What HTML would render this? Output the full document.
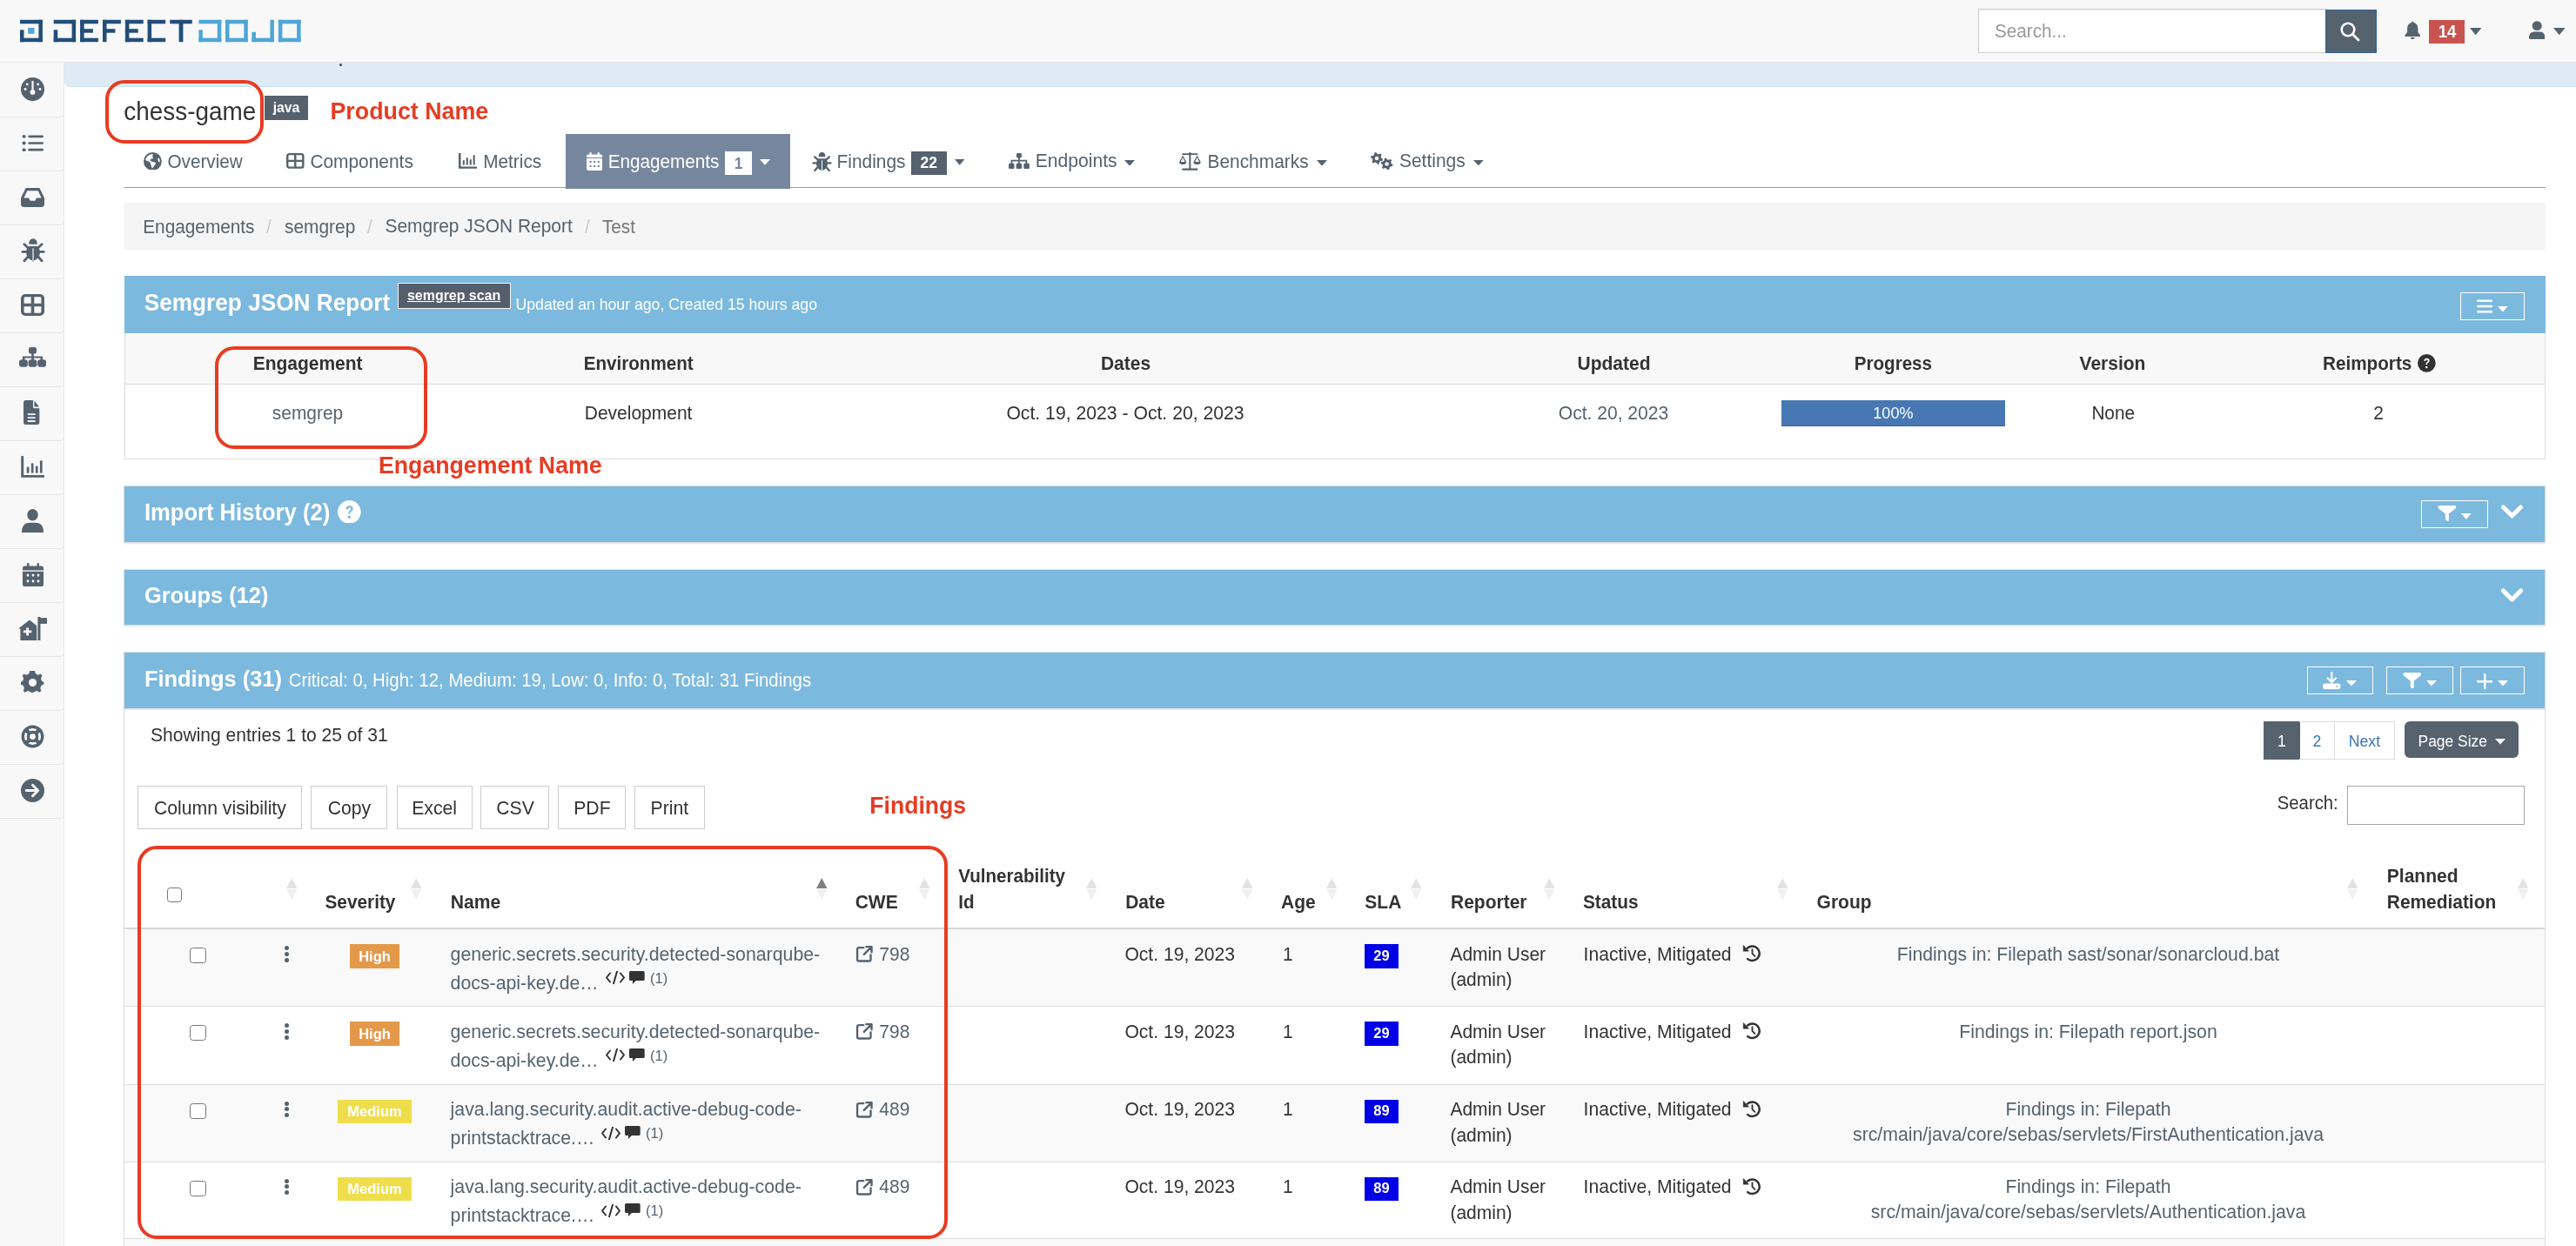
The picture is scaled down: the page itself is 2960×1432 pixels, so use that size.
<!DOCTYPE html>
<html><head><meta charset="utf-8"><title>DefectDojo</title>
<style>
html,body{margin:0;padding:0;width:2960px;height:1432px;overflow:hidden;background:#fff;font-family:"Liberation Sans", sans-serif;}
#w>div,#w>svg{position:absolute;}
.t{position:absolute;white-space:nowrap;line-height:normal;font-family:"Liberation Sans", sans-serif;}
</style></head><body><div id="w" style="position:absolute;left:0;top:0;width:2960px;height:1432px;will-change:transform">
<div style="left:0.0px;top:0.0px;width:2960.0px;height:1432.0px;background:#fff"></div>
<div style="left:0.0px;top:72.0px;width:74.0px;height:1360.0px;background:#f8f8f8;border-right:1px solid #e7e7e7;box-sizing:border-box"></div>
<div style="left:-2.0px;top:71.0px;width:76.0px;height:63.9px;border:1.2px solid #e6e6e6;border-top:none;border-radius:0 0 5px 0;box-sizing:border-box"></div>
<div style="left:-2.0px;top:133.0px;width:76.0px;height:63.9px;border:1.2px solid #e6e6e6;border-top:none;border-radius:0 0 5px 0;box-sizing:border-box"></div>
<div style="left:-2.0px;top:195.0px;width:76.0px;height:63.9px;border:1.2px solid #e6e6e6;border-top:none;border-radius:0 0 5px 0;box-sizing:border-box"></div>
<div style="left:-2.0px;top:257.0px;width:76.0px;height:63.9px;border:1.2px solid #e6e6e6;border-top:none;border-radius:0 0 5px 0;box-sizing:border-box"></div>
<div style="left:-2.0px;top:319.0px;width:76.0px;height:63.9px;border:1.2px solid #e6e6e6;border-top:none;border-radius:0 0 5px 0;box-sizing:border-box"></div>
<div style="left:-2.0px;top:381.0px;width:76.0px;height:63.9px;border:1.2px solid #e6e6e6;border-top:none;border-radius:0 0 5px 0;box-sizing:border-box"></div>
<div style="left:-2.0px;top:443.0px;width:76.0px;height:63.9px;border:1.2px solid #e6e6e6;border-top:none;border-radius:0 0 5px 0;box-sizing:border-box"></div>
<div style="left:-2.0px;top:505.0px;width:76.0px;height:63.9px;border:1.2px solid #e6e6e6;border-top:none;border-radius:0 0 5px 0;box-sizing:border-box"></div>
<div style="left:-2.0px;top:567.0px;width:76.0px;height:63.9px;border:1.2px solid #e6e6e6;border-top:none;border-radius:0 0 5px 0;box-sizing:border-box"></div>
<div style="left:-2.0px;top:629.0px;width:76.0px;height:63.9px;border:1.2px solid #e6e6e6;border-top:none;border-radius:0 0 5px 0;box-sizing:border-box"></div>
<div style="left:-2.0px;top:691.0px;width:76.0px;height:63.9px;border:1.2px solid #e6e6e6;border-top:none;border-radius:0 0 5px 0;box-sizing:border-box"></div>
<div style="left:-2.0px;top:753.0px;width:76.0px;height:63.9px;border:1.2px solid #e6e6e6;border-top:none;border-radius:0 0 5px 0;box-sizing:border-box"></div>
<div style="left:-2.0px;top:815.0px;width:76.0px;height:63.9px;border:1.2px solid #e6e6e6;border-top:none;border-radius:0 0 5px 0;box-sizing:border-box"></div>
<div style="left:-2.0px;top:877.0px;width:76.0px;height:63.9px;border:1.2px solid #e6e6e6;border-top:none;border-radius:0 0 5px 0;box-sizing:border-box"></div>
<svg style="position:absolute;left:24.0px;top:88.5px;width:27.0px;height:27.0px;" viewBox="0 0 24 24" preserveAspectRatio="none"><circle cx="12" cy="12" r="12" fill="#55636f"/><rect x="11" y="3.5" width="2" height="9" fill="#f8f8f8"/><circle cx="12" cy="15" r="2.6" fill="#f8f8f8"/><circle cx="6.5" cy="7" r="1.3" fill="#f8f8f8"/><circle cx="17.5" cy="7" r="1.3" fill="#f8f8f8"/><circle cx="4.5" cy="12" r="1.3" fill="#f8f8f8"/><circle cx="19.5" cy="12" r="1.3" fill="#f8f8f8"/></svg>
<svg style="position:absolute;left:25.0px;top:152.5px;width:25.0px;height:23.0px;" viewBox="0 0 24 24" preserveAspectRatio="none"><circle cx="2.5" cy="4" r="2" fill="#55636f"/><circle cx="2.5" cy="12" r="2" fill="#55636f"/><circle cx="2.5" cy="20" r="2" fill="#55636f"/><rect x="7" y="2.6" width="17" height="2.8" rx="1.4" fill="#55636f"/><rect x="7" y="10.6" width="17" height="2.8" rx="1.4" fill="#55636f"/><rect x="7" y="18.6" width="17" height="2.8" rx="1.4" fill="#55636f"/></svg>
<svg style="position:absolute;left:24.0px;top:213.5px;width:27.0px;height:25.0px;" viewBox="0 0 24 24" preserveAspectRatio="none"><path d="M5 2H19L24 13V20Q24 23 21 23H3Q0 23 0 20V13Z" fill="#55636f"/><path d="M6.5 5H17.5L21 13H16L14.5 16H9.5L8 13H3Z" fill="#f8f8f8"/></svg>
<svg style="position:absolute;left:23.5px;top:273.0px;width:28.0px;height:28.0px;" viewBox="8.5 3 28 28" preserveAspectRatio="none"><path d="M17.7 10.75Q17.7 4.2 22.5 4.2Q27.3 4.2 27.3 10.75Z" fill="#55636f"/><path d="M17.3 13H27.7Q30.6 16 30.4 20.5Q30 27.8 22.5 29.8Q15 27.8 14.6 20.5Q14.4 16 17.3 13ZM21.9 15.8L22.5 14.9L23.1 15.8V30.5H21.9Z" fill="#55636f" fill-rule="evenodd"/><path d="M12.4 10.75L16.7 14.8M32.6 10.75L28.3 14.8M10.3 19.4H14.6M34.7 19.4H30.4M12.4 29.7L16.7 25M32.6 29.7L28.3 25" stroke="#55636f" stroke-width="2.8" stroke-linecap="round"/></svg>
<svg style="position:absolute;left:24.0px;top:337.5px;width:27.0px;height:25.0px;" viewBox="0 0 24 24" preserveAspectRatio="none"><rect x="1.6" y="1.6" width="20.8" height="20.8" rx="3" fill="none" stroke="#55636f" stroke-width="3.2"/><path d="M12 1V23M1 12H23" stroke="#55636f" stroke-width="3.2"/></svg>
<svg style="position:absolute;left:22.0px;top:399.0px;width:31.0px;height:26.0px;" viewBox="0 0 24 24" preserveAspectRatio="none"><rect x="8.5" y="0" width="7" height="7" rx="2" fill="#55636f"/><path d="M12 6V11M4 15V10.6H20V15M12 11V15" stroke="#55636f" stroke-width="2" fill="none"/><rect x="0" y="13.2" width="7.6" height="7.8" rx="2.6" fill="#55636f"/><rect x="8.2" y="13.2" width="7.6" height="7.8" rx="2.6" fill="#55636f"/><rect x="16.4" y="13.2" width="7.6" height="7.8" rx="2.6" fill="#55636f"/></svg>
<svg style="position:absolute;left:26.5px;top:460.0px;width:22.0px;height:28.0px;" viewBox="0 0 24 24" preserveAspectRatio="none"><path d="M0 2.5Q0 0 2.5 0H12V6.5Q12 8 13.5 8H20V21.5Q20 24 17.5 24H2.5Q0 24 0 21.5Z" fill="#55636f"/><path d="M13.6 0.4L19.6 6.4H13.6Z" fill="#55636f"/><rect x="5" y="13" width="10" height="1.6" rx="0.8" fill="#f8f8f8"/><rect x="5" y="16.4" width="10" height="1.6" rx="0.8" fill="#f8f8f8"/><rect x="5" y="19.8" width="10" height="1.6" rx="0.8" fill="#f8f8f8"/></svg>
<svg style="position:absolute;left:24.0px;top:523.5px;width:27.0px;height:25.0px;" viewBox="0 0 24 24" preserveAspectRatio="none"><path d="M1.5 1V22.5H24" stroke="#55636f" stroke-width="2.6" fill="none" stroke-linecap="round"/><rect x="6" y="12" width="2.4" height="7" rx="1" fill="#55636f"/><rect x="10.5" y="8" width="2.4" height="11" rx="1" fill="#55636f"/><rect x="15" y="11" width="2.4" height="8" rx="1" fill="#55636f"/><rect x="19.5" y="5" width="2.4" height="14" rx="1" fill="#55636f"/></svg>
<svg style="position:absolute;left:25.0px;top:584.5px;width:25.0px;height:27.0px;" viewBox="0 0 24 24" preserveAspectRatio="none"><circle cx="12" cy="6" r="6" fill="#55636f"/><path d="M0 24Q0 14 9 14H15Q24 14 24 24Z" fill="#55636f"/></svg>
<svg style="position:absolute;left:25.5px;top:646.5px;width:24.0px;height:27.0px;" viewBox="0 0 24 24" preserveAspectRatio="none"><rect x="5" y="0" width="2.5" height="5" rx="1" fill="#55636f"/><rect x="16.5" y="0" width="2.5" height="5" rx="1" fill="#55636f"/><rect x="0" y="3" width="24" height="21" rx="2.5" fill="#55636f"/><rect x="0" y="7.5" width="24" height="1.2" fill="#f8f8f8"/><circle cx="6" cy="12.5" r="1.4" fill="#f8f8f8"/><circle cx="6" cy="18.5" r="1.4" fill="#f8f8f8"/><circle cx="12" cy="12.5" r="1.4" fill="#f8f8f8"/><circle cx="12" cy="18.5" r="1.4" fill="#f8f8f8"/><circle cx="18" cy="12.5" r="1.4" fill="#f8f8f8"/><circle cx="18" cy="18.5" r="1.4" fill="#f8f8f8"/></svg>
<svg style="position:absolute;left:21.0px;top:708.5px;width:33.0px;height:27.0px;" viewBox="0 0 28 24" preserveAspectRatio="none"><path d="M0 12L11 3L18 9V24H2V12Z" fill="#55636f"/><rect x="19" y="0" width="2.6" height="24" fill="#55636f"/><rect x="21" y="1" width="7" height="6" fill="#55636f"/><path d="M9 11V19M5 15H13" stroke="#f8f8f8" stroke-width="2.4"/></svg>
<svg style="position:absolute;left:24.0px;top:770.5px;width:27.0px;height:27.0px;" viewBox="0 0 24 24" preserveAspectRatio="none"><path d="M12 0L14.3 0.3L15 3.4L17.7 4.9L20.6 3.7L22.3 5.6L20.9 8.5L21.7 11.3L24 12.6V15.1L21.4 16.2L20.2 19L21.3 22L19.4 23.6L16.6 22.1L13.8 23L12.6 24H10.4L9.4 23L6.6 22.1L3.8 23.6L1.9 22L3 19L1.8 16.2L-0.8 15.1V12.6L1.5 11.3L2.3 8.5L0.9 5.6L2.6 3.7L5.5 4.9L8.2 3.4L8.9 0.3Z" fill="#55636f" transform="translate(0.6 -0.5) scale(0.95)"/><circle cx="12" cy="12" r="4" fill="#f8f8f8"/></svg>
<svg style="position:absolute;left:24.0px;top:832.5px;width:27.0px;height:27.0px;" viewBox="0 0 24 24" preserveAspectRatio="none"><circle cx="12" cy="12" r="10" fill="none" stroke="#55636f" stroke-width="3"/><circle cx="12" cy="12" r="4.5" fill="none" stroke="#55636f" stroke-width="3"/><path d="M4.5 4.5L8.8 8.8M19.5 4.5L15.2 8.8M4.5 19.5L8.8 15.2M19.5 19.5L15.2 15.2" stroke="#55636f" stroke-width="4"/></svg>
<svg style="position:absolute;left:24.0px;top:894.5px;width:27.0px;height:27.0px;" viewBox="0 0 24 24" preserveAspectRatio="none"><circle cx="12" cy="12" r="12" fill="#55636f"/><path d="M5.5 12H17M12 6.5L17.5 12L12 17.5" stroke="#f8f8f8" stroke-width="2.6" fill="none" stroke-linecap="round" stroke-linejoin="round"/></svg>
<div style="left:0.0px;top:0.0px;width:2960.0px;height:72.0px;background:#f8f8f8;border-bottom:1px solid #e7e7e7;box-sizing:border-box"></div>
<svg style="position:absolute;left:0.0px;top:0.0px;width:360.0px;height:72.0px;" viewBox="0 0 360 72" preserveAspectRatio="none"><rect x="23.00" y="22.80" width="25.90" height="4.50" fill="#224e79"/><rect x="44.40" y="22.80" width="4.50" height="25.40" fill="#224e79"/><rect x="23.00" y="43.70" width="25.90" height="4.50" fill="#224e79"/><rect x="23.00" y="34.30" width="4.50" height="13.90" fill="#224e79"/><rect x="61.70" y="22.80" width="25.40" height="4.50" fill="#224e79"/><rect x="82.60" y="22.80" width="4.50" height="25.40" fill="#224e79"/><rect x="61.70" y="43.70" width="25.40" height="4.50" fill="#224e79"/><rect x="61.70" y="34.30" width="4.50" height="13.90" fill="#224e79"/><rect x="92.10" y="22.80" width="4.50" height="25.40" fill="#224e79"/><rect x="92.10" y="22.80" width="20.80" height="4.50" fill="#224e79"/><rect x="92.10" y="43.70" width="20.80" height="4.50" fill="#224e79"/><rect x="92.10" y="33.20" width="14.80" height="4.50" fill="#224e79"/><rect x="118.00" y="22.80" width="4.50" height="25.40" fill="#224e79"/><rect x="118.00" y="22.80" width="20.90" height="4.50" fill="#224e79"/><rect x="118.00" y="33.20" width="14.40" height="4.50" fill="#224e79"/><rect x="143.90" y="22.80" width="4.50" height="25.40" fill="#224e79"/><rect x="143.90" y="22.80" width="20.80" height="4.50" fill="#224e79"/><rect x="143.90" y="43.70" width="20.80" height="4.50" fill="#224e79"/><rect x="143.90" y="33.20" width="14.80" height="4.50" fill="#224e79"/><rect x="169.60" y="22.80" width="4.50" height="25.40" fill="#224e79"/><rect x="169.60" y="22.80" width="20.60" height="4.50" fill="#224e79"/><rect x="169.60" y="43.70" width="20.60" height="4.50" fill="#224e79"/><rect x="195.20" y="22.80" width="25.60" height="4.50" fill="#224e79"/><rect x="205.60" y="22.80" width="4.80" height="25.40" fill="#224e79"/><rect x="228.40" y="22.80" width="25.90" height="4.50" fill="#4ea7d6"/><rect x="249.80" y="22.80" width="4.50" height="25.40" fill="#4ea7d6"/><rect x="228.40" y="43.70" width="25.90" height="4.50" fill="#4ea7d6"/><rect x="228.40" y="34.30" width="4.50" height="13.90" fill="#4ea7d6"/><rect x="259.00" y="22.80" width="25.80" height="4.50" fill="#4ea7d6"/><rect x="280.30" y="22.80" width="4.50" height="25.40" fill="#4ea7d6"/><rect x="259.00" y="43.70" width="25.80" height="4.50" fill="#4ea7d6"/><rect x="259.00" y="22.80" width="4.50" height="25.40" fill="#4ea7d6"/><rect x="310.40" y="22.80" width="4.50" height="25.40" fill="#4ea7d6"/><rect x="289.40" y="43.70" width="25.50" height="4.50" fill="#4ea7d6"/><rect x="289.40" y="36.80" width="4.50" height="11.40" fill="#4ea7d6"/><rect x="319.90" y="22.80" width="25.70" height="4.50" fill="#4ea7d6"/><rect x="341.10" y="22.80" width="4.50" height="25.40" fill="#4ea7d6"/><rect x="319.90" y="43.70" width="25.70" height="4.50" fill="#4ea7d6"/><rect x="319.90" y="22.80" width="4.50" height="25.40" fill="#4ea7d6"/><rect x="32.2" y="32" width="7.3" height="6.8" fill="#4ea7d6"/></svg>
<div style="left:2273.0px;top:10.0px;width:400.0px;height:50.5px;background:#fff;border:1px solid #cccccc;box-sizing:border-box;box-shadow:inset 0 1px 1px rgba(0,0,0,.075)"></div>
<div class="t" style="left:2292.0px;top:24.3px;font-size:20.7px;color:#999999;transform-origin:0 19.0px;transform:scaleY(1.045);">Search...</div>
<div style="left:2672.0px;top:11.0px;width:59.0px;height:50.0px;background:#55636f;border:1px solid #2f64a0;box-sizing:border-box"></div>
<svg style="position:absolute;left:2688.0px;top:24.0px;width:24.0px;height:24.0px;" viewBox="0 0 24 24" preserveAspectRatio="none"><circle cx="10" cy="10" r="7.3" fill="none" stroke="#fff" stroke-width="2.6"/><path d="M15.5 15.5L22 22" stroke="#fff" stroke-width="2.8" stroke-linecap="round"/></svg>
<svg style="position:absolute;left:2762.7px;top:23.6px;width:18.5px;height:21.1px;" viewBox="0 0 18 21" preserveAspectRatio="none"><path d="M9 0.5Q10 0.5 10 1.8Q15 3 15 9V13L17.6 16.5Q18 17.8 16.8 17.8H1.2Q0 17.8 0.4 16.5L3 13V9Q3 3 8 1.8Q8 0.5 9 0.5Z" fill="#55636f"/><path d="M6.5 19H11.5Q11 21 9 21Q7 21 6.5 19Z" fill="#55636f"/></svg>
<div style="left:2791.0px;top:23.0px;width:41.0px;height:27.0px;background:#c9544f"></div>
<div class="t" style="left:2212.0px;width:1200px;text-align:center;top:25.9px;font-size:18.5px;color:#fff;font-weight:bold;transform-origin:0 17.0px;transform:scaleY(1.045);">14</div>
<svg style="position:absolute;left:2837.8px;top:31.5px;width:13.4px;height:8.3px;" viewBox="0 0 10 6" preserveAspectRatio="none"><path d="M0 0H10L5 6Z" fill="#55636f"/></svg>
<svg style="position:absolute;left:2905.8px;top:23.6px;width:18.4px;height:21.1px;" viewBox="0 0 18 21" preserveAspectRatio="none"><circle cx="9" cy="5.6" r="5.4" fill="#55636f"/><path d="M0 19.5Q0 12.4 6 12.4H12Q18 12.4 18 19.5Q18 21 16.5 21H1.5Q0 21 0 19.5Z" fill="#55636f"/></svg>
<svg style="position:absolute;left:2933.8px;top:31.5px;width:13.7px;height:8.3px;" viewBox="0 0 10 6" preserveAspectRatio="none"><path d="M0 0H10L5 6Z" fill="#55636f"/></svg>
<div style="left:74.0px;top:72.0px;width:2886.0px;height:28.4px;background:#deebf6;border-bottom:1.5px solid #c5e3ee;border-radius:0 0 0 7px;box-sizing:border-box"></div>
<div style="left:390.0px;top:72.5px;width:3.0px;height:3.0px;background:#444;border-radius:50%"></div>
<div class="t" style="left:142.3px;top:112.5px;font-size:27.9px;color:#333333;transform-origin:0 25.7px;transform:scaleY(1.045);">chess-game</div>
<div style="left:304.2px;top:110.0px;width:49.7px;height:27.6px;background:#56616e"></div>
<div class="t" style="left:-271.0px;width:1200px;text-align:center;top:114.7px;font-size:15.8px;color:#fff;font-weight:bold;transform-origin:0 14.5px;transform:scaleY(1.045);">java</div>
<div class="t" style="left:379.5px;top:112.9px;font-size:26.8px;color:#e63c23;font-weight:bold;transform-origin:0 24.7px;transform:scaleY(1.045);">Product Name</div>
<div style="left:121.0px;top:92.0px;width:181.8px;height:72.8px;border:4.2px solid #e63c23;border-radius:22px;box-sizing:border-box"></div>
<div style="left:142.0px;top:214.6px;width:2783.0px;height:1.4px;background:#8ea2bb"></div>
<div style="left:650.0px;top:154.0px;width:258.0px;height:62.8px;background:#76879d"></div>
<svg style="position:absolute;left:165.1px;top:174.6px;width:20.8px;height:20.9px;" viewBox="0 0 24 24" preserveAspectRatio="none"><circle cx="12" cy="12" r="12" fill="#55636f"/><path d="M2.6 9.4Q4 5 9 3L12.4 2.2L12 4.4Q11.2 5.6 12.4 6.6L12.4 8.4L9 9.3L8.8 10.8Q9.6 12 13 12.6L16.2 13.8Q16 15.6 14 18L11.3 21.4L9.8 17Q9.4 13.8 7.6 12.4L2.8 10.6Z" fill="#fff"/><ellipse cx="20.3" cy="10.3" rx="1.2" ry="2.9" transform="rotate(-15 20.3 10.3)" fill="#fff"/></svg>
<div class="t" style="left:192.5px;top:173.7px;font-size:20.7px;color:#55636f;transform-origin:0 19.0px;transform:scaleY(1.045);">Overview</div>
<svg style="position:absolute;left:329.3px;top:176.0px;width:20.5px;height:17.8px;" viewBox="0 0 20 18" preserveAspectRatio="none"><rect x="1.2" y="1.2" width="17.6" height="15.6" rx="2" fill="none" stroke="#55636f" stroke-width="2.4"/><path d="M10 1V17M1 9H19" stroke="#55636f" stroke-width="2.4"/></svg>
<div class="t" style="left:356.4px;top:173.5px;font-size:20.9px;color:#55636f;transform-origin:0 19.2px;transform:scaleY(1.045);">Components</div>
<svg style="position:absolute;left:527.2px;top:176.0px;width:20.8px;height:17.8px;" viewBox="0 0 20 18" preserveAspectRatio="none"><path d="M1.2 0V16.8H20" stroke="#55636f" stroke-width="2.4" fill="none" stroke-linecap="round"/><rect x="4.6" y="8" width="2" height="6" rx="1" fill="#55636f"/><rect x="8.4" y="5" width="2" height="9" rx="1" fill="#55636f"/><rect x="12.2" y="7" width="2" height="7" rx="1" fill="#55636f"/><rect x="16" y="2" width="2" height="12" rx="1" fill="#55636f"/></svg>
<div class="t" style="left:555.2px;top:173.6px;font-size:20.8px;color:#55636f;transform-origin:0 19.1px;transform:scaleY(1.045);">Metrics</div>
<svg style="position:absolute;left:673.7px;top:174.9px;width:18.3px;height:20.9px;" viewBox="0 0 18 21" preserveAspectRatio="none"><rect x="3.4" y="0" width="2.2" height="4" rx="1" fill="#ffffff"/><rect x="12.4" y="0" width="2.2" height="4" rx="1" fill="#ffffff"/><rect x="0" y="2.4" width="18" height="18.6" rx="2.2" fill="#ffffff"/><rect x="0" y="6" width="18" height="1" fill="#76879d"/><circle cx="4.5" cy="11" r="1.2" fill="#76879d"/><circle cx="4.5" cy="16" r="1.2" fill="#76879d"/><circle cx="9" cy="11" r="1.2" fill="#76879d"/><circle cx="9" cy="16" r="1.2" fill="#76879d"/><circle cx="13.5" cy="11" r="1.2" fill="#76879d"/><circle cx="13.5" cy="16" r="1.2" fill="#76879d"/></svg>
<div class="t" style="left:698.8px;top:173.7px;font-size:20.7px;color:#fff;transform-origin:0 19.0px;transform:scaleY(1.045);">Engagements</div>
<div style="left:832.9px;top:174.0px;width:31.1px;height:27.0px;background:#fff"></div>
<div class="t" style="left:248.5px;width:1200px;text-align:center;top:177.9px;font-size:17.5px;color:#76879d;font-weight:bold;transform-origin:0 16.1px;transform:scaleY(1.045);">1</div>
<svg style="position:absolute;left:872.8px;top:183.4px;width:12.0px;height:6.8px;" viewBox="0 0 10 6" preserveAspectRatio="none"><path d="M0 0H10L5 6Z" fill="#fff"/></svg>
<svg style="position:absolute;left:933.3px;top:173.7px;width:23.0px;height:23.0px;" viewBox="8.5 3 28 28" preserveAspectRatio="none"><path d="M17.7 10.75Q17.7 4.2 22.5 4.2Q27.3 4.2 27.3 10.75Z" fill="#55636f"/><path d="M17.3 13H27.7Q30.6 16 30.4 20.5Q30 27.8 22.5 29.8Q15 27.8 14.6 20.5Q14.4 16 17.3 13ZM21.9 15.8L22.5 14.9L23.1 15.8V30.5H21.9Z" fill="#55636f" fill-rule="evenodd"/><path d="M12.4 10.75L16.7 14.8M32.6 10.75L28.3 14.8M10.3 19.4H14.6M34.7 19.4H30.4M12.4 29.7L16.7 25M32.6 29.7L28.3 25" stroke="#55636f" stroke-width="2.8" stroke-linecap="round"/></svg>
<div class="t" style="left:961.5px;top:173.5px;font-size:20.9px;color:#55636f;transform-origin:0 19.2px;transform:scaleY(1.045);">Findings</div>
<div style="left:1047.0px;top:174.0px;width:40.5px;height:26.6px;background:#56616f"></div>
<div class="t" style="left:467.2px;width:1200px;text-align:center;top:177.4px;font-size:17.5px;color:#fff;font-weight:bold;transform-origin:0 16.1px;transform:scaleY(1.045);">22</div>
<svg style="position:absolute;left:1097.0px;top:183.4px;width:11.4px;height:6.8px;" viewBox="0 0 10 6" preserveAspectRatio="none"><path d="M0 0H10L5 6Z" fill="#55636f"/></svg>
<svg style="position:absolute;left:1159.0px;top:176.0px;width:23.9px;height:18.2px;" viewBox="0 0 24 18" preserveAspectRatio="none"><rect x="9" y="0" width="6" height="5.4" rx="1.4" fill="#55636f"/><path d="M12 5V9M3.5 13V8.6H20.5V13M12 9V13" stroke="#55636f" stroke-width="1.8" fill="none"/><rect x="0" y="11.4" width="6.6" height="6.6" rx="2" fill="#55636f"/><rect x="8.7" y="11.4" width="6.6" height="6.6" rx="2" fill="#55636f"/><rect x="17.4" y="11.4" width="6.6" height="6.6" rx="2" fill="#55636f"/></svg>
<div class="t" style="left:1189.8px;top:173.3px;font-size:21.1px;color:#55636f;transform-origin:0 19.4px;transform:scaleY(1.045);">Endpoints</div>
<svg style="position:absolute;left:1292.0px;top:183.5px;width:12.0px;height:6.7px;" viewBox="0 0 10 6" preserveAspectRatio="none"><path d="M0 0H10L5 6Z" fill="#55636f"/></svg>
<svg style="position:absolute;left:1353.7px;top:174.7px;width:26.7px;height:21.0px;" viewBox="0 0 26 21" preserveAspectRatio="none"><rect x="4" y="1.2" width="18" height="1.8" rx="0.9" fill="#55636f"/><circle cx="13" cy="1.6" r="1.6" fill="#55636f"/><rect x="12" y="1" width="2" height="18" fill="#55636f"/><rect x="4" y="18.6" width="18" height="2.2" rx="1.1" fill="#55636f"/><path d="M5 3.5L1 11.2Q1 14 5 14Q9 14 9 11.2ZM5 6L2.7 11H7.3Z" fill="#55636f" fill-rule="evenodd"/><path d="M21 3.5L17 11.2Q17 14 21 14Q25 14 25 11.2ZM21 6L18.7 11H23.3Z" fill="#55636f" fill-rule="evenodd"/></svg>
<div class="t" style="left:1387.5px;top:173.5px;font-size:20.9px;color:#55636f;transform-origin:0 19.2px;transform:scaleY(1.045);">Benchmarks</div>
<svg style="position:absolute;left:1513.0px;top:183.5px;width:12.0px;height:6.7px;" viewBox="0 0 10 6" preserveAspectRatio="none"><path d="M0 0H10L5 6Z" fill="#55636f"/></svg>
<svg style="position:absolute;left:1574.9px;top:174.8px;width:26.1px;height:20.9px;" viewBox="0 0 26 21" preserveAspectRatio="none"><path d="M13.94 7.91L13.47 9.68L11.00 10.07L10.07 11.00L9.68 13.47L7.91 13.94L6.34 12.00L5.07 11.66L2.74 12.55L1.45 11.26L2.34 8.93L2.00 7.66L0.06 6.09L0.53 4.32L3.00 3.93L3.93 3.00L4.32 0.53L6.09 0.06L7.66 2.00L8.93 2.34L11.26 1.45L12.55 2.74L11.66 5.07L12.00 6.34Z" fill="#55636f"/><circle cx="7" cy="7" r="2.2" fill="#fff"/><path d="M25.44 14.41L24.97 16.18L22.50 16.57L21.57 17.50L21.18 19.97L19.41 20.44L17.84 18.50L16.57 18.16L14.24 19.05L12.95 17.76L13.84 15.43L13.50 14.16L11.56 12.59L12.03 10.82L14.50 10.43L15.43 9.50L15.82 7.03L17.59 6.56L19.16 8.50L20.43 8.84L22.76 7.95L24.05 9.24L23.16 11.57L23.50 12.84Z" fill="#55636f"/><circle cx="18.5" cy="13.5" r="2.2" fill="#fff"/></svg>
<div class="t" style="left:1607.9px;top:173.4px;font-size:21.0px;color:#55636f;transform-origin:0 19.3px;transform:scaleY(1.045);">Settings</div>
<svg style="position:absolute;left:1693.3px;top:183.8px;width:11.7px;height:6.3px;" viewBox="0 0 10 6" preserveAspectRatio="none"><path d="M0 0H10L5 6Z" fill="#55636f"/></svg>
<div style="left:142.0px;top:233.0px;width:2783.0px;height:54.0px;background:#f5f5f5"></div>
<div class="t" style="left:164.2px;top:248.6px;font-size:20.8px;color:#55636f;transform-origin:0 19.1px;transform:scaleY(1.045);">Engagements</div>
<div class="t" style="left:306.0px;top:248.6px;font-size:20.8px;color:#cccccc;transform-origin:0 19.1px;transform:scaleY(1.045);">/</div>
<div class="t" style="left:327.0px;top:248.5px;font-size:20.9px;color:#55636f;transform-origin:0 19.2px;transform:scaleY(1.045);">semgrep</div>
<div class="t" style="left:421.9px;top:248.6px;font-size:20.8px;color:#cccccc;transform-origin:0 19.1px;transform:scaleY(1.045);">/</div>
<div class="t" style="left:442.5px;top:248.4px;font-size:20.95px;color:#55636f;transform-origin:0 19.3px;transform:scaleY(1.045);">Semgrep JSON Report</div>
<div class="t" style="left:672.0px;top:248.6px;font-size:20.8px;color:#cccccc;transform-origin:0 19.1px;transform:scaleY(1.045);">/</div>
<div class="t" style="left:692.0px;top:248.7px;font-size:20.7px;color:#777777;transform-origin:0 19.0px;transform:scaleY(1.045);">Test</div>
<div style="left:142.5px;top:316.6px;width:2782.0px;height:211.4px;border:1px solid #dddddd;box-sizing:border-box"></div>
<div style="left:142.5px;top:317.4px;width:2782.0px;height:66.1px;background:#7cb9de"></div>
<div class="t" style="left:165.8px;top:332.5px;font-size:26.2px;color:#fff;font-weight:bold;transform-origin:0 24.1px;transform:scaleY(1.045);">Semgrep JSON Report</div>
<div style="left:457.0px;top:325.0px;width:130.0px;height:30.0px;background:#555f6c;border:1.2px solid #f4f4f4;box-sizing:border-box"></div>
<div class="t" style="left:468.0px;top:330.6px;font-size:15.95px;color:#fff;font-weight:bold;transform-origin:0 14.7px;transform:scaleY(1.045);text-decoration:underline;">semgrep scan</div>
<div class="t" style="left:592.5px;top:340.2px;font-size:17.66px;color:#fff;transform-origin:0 16.2px;transform:scaleY(1.045);">Updated an hour ago, Created 15 hours ago</div>
<div style="left:2827.0px;top:336.0px;width:74.0px;height:32.0px;border:1.2px solid #fff;box-sizing:border-box"></div>
<svg style="position:absolute;left:2845.7px;top:344.0px;width:18.3px;height:16.0px;" viewBox="0 0 18 16" preserveAspectRatio="none"><rect x="0" y="0.6" width="18" height="2.4" rx="1.2" fill="#fff"/><rect x="0" y="6.8" width="18" height="2.4" rx="1.2" fill="#fff"/><rect x="0" y="13" width="18" height="2.4" rx="1.2" fill="#fff"/></svg>
<svg style="position:absolute;left:2870.0px;top:351.5px;width:11.7px;height:6.5px;" viewBox="0 0 10 6" preserveAspectRatio="none"><path d="M0 0H10L5 6Z" fill="#fff"/></svg>
<div style="left:143.5px;top:383.5px;width:2780.0px;height:58.7px;background:#f8f8f8;border-bottom:1.2px solid #dddddd;box-sizing:border-box"></div>
<div class="t" style="left:-246.4px;width:1200px;text-align:center;top:405.7px;font-size:20.95px;color:#333333;font-weight:bold;transform-origin:0 19.3px;transform:scaleY(1.045);">Engagement</div>
<div class="t" style="left:133.7px;width:1200px;text-align:center;top:406.0px;font-size:20.6px;color:#333333;font-weight:bold;transform-origin:0 19.0px;transform:scaleY(1.045);">Environment</div>
<div class="t" style="left:693.5px;width:1200px;text-align:center;top:405.7px;font-size:21px;color:#333333;font-weight:bold;transform-origin:0 19.3px;transform:scaleY(1.045);">Dates</div>
<div class="t" style="left:1254.5px;width:1200px;text-align:center;top:405.7px;font-size:21px;color:#333333;font-weight:bold;transform-origin:0 19.3px;transform:scaleY(1.045);">Updated</div>
<div class="t" style="left:1575.4px;width:1200px;text-align:center;top:406.0px;font-size:20.6px;color:#333333;font-weight:bold;transform-origin:0 19.0px;transform:scaleY(1.045);">Progress</div>
<div class="t" style="left:1827.5px;width:1200px;text-align:center;top:405.7px;font-size:21px;color:#333333;font-weight:bold;transform-origin:0 19.3px;transform:scaleY(1.045);">Version</div>
<div class="t" style="left:2669.0px;top:406.0px;font-size:20.7px;color:#333333;font-weight:bold;transform-origin:0 19.0px;transform:scaleY(1.045);">Reimports</div>
<svg style="position:absolute;left:2778.3px;top:407.0px;width:20.7px;height:20.7px;" viewBox="0 0 20 20" preserveAspectRatio="none"><circle cx="10" cy="10" r="10" fill="#333"/><path d="M7 7.6Q7 4.6 10.2 4.6Q13.2 4.6 13.2 7.3Q13.2 9 11.3 9.9Q10.6 10.4 10.6 11.6H9.2Q9.1 9.6 10.4 8.8Q11.4 8.2 11.4 7.4Q11.4 6.3 10.1 6.3Q8.8 6.3 8.8 7.8Z" fill="#fff"/><circle cx="9.9" cy="14.4" r="1.2" fill="#fff"/></svg>
<div class="t" style="left:-246.5px;width:1200px;text-align:center;top:463.3px;font-size:20.9px;color:#55636f;transform-origin:0 19.2px;transform:scaleY(1.045);">semgrep</div>
<div class="t" style="left:133.6px;width:1200px;text-align:center;top:463.2px;font-size:21px;color:#333333;transform-origin:0 19.3px;transform:scaleY(1.045);">Development</div>
<div class="t" style="left:693.0px;width:1200px;text-align:center;top:463.0px;font-size:21.2px;color:#333333;transform-origin:0 19.5px;transform:scaleY(1.045);">Oct. 19, 2023 - Oct. 20, 2023</div>
<div class="t" style="left:1254.0px;width:1200px;text-align:center;top:463.1px;font-size:21.05px;color:#55636f;transform-origin:0 19.4px;transform:scaleY(1.045);">Oct. 20, 2023</div>
<div style="left:2047.0px;top:460.0px;width:257.0px;height:29.7px;background:#4778b3;box-shadow:inset 0 -1px 0 rgba(0,0,0,.15)"></div>
<div class="t" style="left:1575.4px;width:1200px;text-align:center;top:464.9px;font-size:18px;color:#fff;transform-origin:0 16.6px;transform:scaleY(1.045);">100%</div>
<div class="t" style="left:1828.2px;width:1200px;text-align:center;top:463.4px;font-size:20.75px;color:#333333;transform-origin:0 19.1px;transform:scaleY(1.045);">None</div>
<div class="t" style="left:2133.2px;width:1200px;text-align:center;top:463.2px;font-size:21px;color:#333333;transform-origin:0 19.3px;transform:scaleY(1.045);">2</div>
<div style="left:247.0px;top:397.8px;width:244.4px;height:118.2px;border:4.2px solid #e63c23;border-radius:22px;box-sizing:border-box"></div>
<div class="t" style="left:435.0px;top:520.4px;font-size:26.7px;color:#e63c23;font-weight:bold;transform-origin:0 24.6px;transform:scaleY(1.045);">Engangement Name</div>
<div style="left:142.0px;top:557.7px;width:2783.0px;height:65.9px;background:#e2dfdf;box-shadow:0 1px 2px rgba(0,0,0,0.10)"></div>
<div style="left:143.0px;top:558.7px;width:2781.0px;height:63.9px;background:#7cb9de"></div>
<div class="t" style="left:165.9px;top:574.6px;font-size:25.6px;color:#fff;font-weight:bold;transform-origin:0 23.6px;transform:scaleY(1.045);">Import History (2)</div>
<svg style="position:absolute;left:388.0px;top:574.5px;width:26.7px;height:26.7px;" viewBox="0 0 20 20" preserveAspectRatio="none"><circle cx="10" cy="10" r="10" fill="#fff"/><path d="M7 7.6Q7 4.6 10.2 4.6Q13.2 4.6 13.2 7.3Q13.2 9 11.3 9.9Q10.6 10.4 10.6 11.6H9.2Q9.1 9.6 10.4 8.8Q11.4 8.2 11.4 7.4Q11.4 6.3 10.1 6.3Q8.8 6.3 8.8 7.8Z" fill="#7cb9de"/><circle cx="9.9" cy="14.4" r="1.2" fill="#7cb9de"/></svg>
<div style="left:2782.0px;top:575.0px;width:77.0px;height:31.5px;border:1.2px solid #fff;box-sizing:border-box"></div>
<svg style="position:absolute;left:2800.8px;top:581.4px;width:21.7px;height:18.1px;" viewBox="0 0 22 18" preserveAspectRatio="none"><path d="M0.5 1Q0.5 0 1.5 0H20.5Q21.5 0 21.5 1V3L13 9.5V17Q13 18 12 18Q10.5 17.5 9 16V9.5L0.5 3Z" fill="#fff"/></svg>
<svg style="position:absolute;left:2828.0px;top:590.0px;width:11.8px;height:7.0px;" viewBox="0 0 10 6" preserveAspectRatio="none"><path d="M0 0H10L5 6Z" fill="#fff"/></svg>
<svg style="position:absolute;left:2873.8px;top:579.8px;width:25.0px;height:16.8px;" viewBox="0 0 25 17" preserveAspectRatio="none"><path d="M2.5 3L12.5 13L22.5 3" stroke="#fff" stroke-width="5" fill="none" stroke-linecap="round" stroke-linejoin="round"/></svg>
<div style="left:142.0px;top:653.6px;width:2783.0px;height:65.6px;background:#e2dfdf;box-shadow:0 1px 2px rgba(0,0,0,0.10)"></div>
<div style="left:143.0px;top:654.6px;width:2781.0px;height:63.6px;background:#7cb9de"></div>
<div class="t" style="left:165.9px;top:670.3px;font-size:25.4px;color:#fff;font-weight:bold;transform-origin:0 23.4px;transform:scaleY(1.045);">Groups (12)</div>
<svg style="position:absolute;left:2873.8px;top:675.6px;width:25.0px;height:16.9px;" viewBox="0 0 25 17" preserveAspectRatio="none"><path d="M2.5 3L12.5 13L22.5 3" stroke="#fff" stroke-width="5" fill="none" stroke-linecap="round" stroke-linejoin="round"/></svg>
<div style="left:142.2px;top:813.0px;width:2782.4px;height:627.0px;border:1px solid #dddddd;box-sizing:border-box"></div>
<div style="left:142.0px;top:748.7px;width:2783.0px;height:66.0px;background:#e2dfdf;box-shadow:0 1px 2px rgba(0,0,0,0.10)"></div>
<div style="left:143.0px;top:749.7px;width:2781.0px;height:64.0px;background:#7cb9de"></div>
<div class="t" style="left:165.9px;top:766.4px;font-size:25.4px;color:#fff;font-weight:bold;transform-origin:0 23.4px;transform:scaleY(1.045);">Findings (31)</div>
<div class="t" style="left:331.8px;top:771.2px;font-size:20.4px;color:#fff;transform-origin:0 18.8px;transform:scaleY(1.045);">Critical: 0, High: 12, Medium: 19, Low: 0, Info: 0, Total: 31 Findings</div>
<div style="left:2651.0px;top:766.4px;width:76.0px;height:31.3px;border:1.2px solid #fff;box-sizing:border-box"></div>
<div style="left:2742.0px;top:766.4px;width:77.0px;height:31.3px;border:1.2px solid #fff;box-sizing:border-box"></div>
<div style="left:2827.0px;top:766.4px;width:74.0px;height:31.3px;border:1.2px solid #fff;box-sizing:border-box"></div>
<svg style="position:absolute;left:2669.0px;top:772.0px;width:20.5px;height:20.0px;" viewBox="0 0 20 20" preserveAspectRatio="none"><path d="M10 1V12M5.5 7.5L10 12L14.5 7.5" stroke="#fff" stroke-width="2.2" fill="none" stroke-linecap="round" stroke-linejoin="round"/><rect x="0" y="13.5" width="20" height="6.5" rx="3" fill="#fff"/><circle cx="16" cy="16.8" r="1.1" fill="#7cb9de"/></svg>
<svg style="position:absolute;left:2696.0px;top:781.5px;width:12.0px;height:6.5px;" viewBox="0 0 10 6" preserveAspectRatio="none"><path d="M0 0H10L5 6Z" fill="#fff"/></svg>
<svg style="position:absolute;left:2761.0px;top:772.5px;width:21.5px;height:18.5px;" viewBox="0 0 22 18" preserveAspectRatio="none"><path d="M0.5 1Q0.5 0 1.5 0H20.5Q21.5 0 21.5 1V3L13 9.5V17Q13 18 12 18Q10.5 17.5 9 16V9.5L0.5 3Z" fill="#fff"/></svg>
<svg style="position:absolute;left:2788.0px;top:781.5px;width:12.0px;height:6.5px;" viewBox="0 0 10 6" preserveAspectRatio="none"><path d="M0 0H10L5 6Z" fill="#fff"/></svg>
<svg style="position:absolute;left:2845.5px;top:773.5px;width:18.5px;height:18.5px;" viewBox="0 0 18 18" preserveAspectRatio="none"><path d="M9 1V17M1 9H17" stroke="#fff" stroke-width="2.4" stroke-linecap="round"/></svg>
<svg style="position:absolute;left:2869.5px;top:781.5px;width:12.0px;height:6.5px;" viewBox="0 0 10 6" preserveAspectRatio="none"><path d="M0 0H10L5 6Z" fill="#fff"/></svg>
<div class="t" style="left:173.0px;top:832.6px;font-size:21.05px;color:#333333;transform-origin:0 19.4px;transform:scaleY(1.045);">Showing entries 1 to 25 of 31</div>
<div style="left:2601.0px;top:829.2px;width:42.0px;height:43.5px;background:#56636f"></div>
<div style="left:2642.0px;top:829.2px;width:110.0px;height:43.5px;border:1px solid #dddddd;border-left:none;box-sizing:border-box"></div>
<div style="left:2682.0px;top:829.2px;width:1.0px;height:43.5px;background:#dddddd"></div>
<div class="t" style="left:2022.0px;width:1200px;text-align:center;top:841.8px;font-size:17.6px;color:#fff;transform-origin:0 16.2px;transform:scaleY(1.045);">1</div>
<div class="t" style="left:2657.4px;top:841.8px;font-size:17.6px;color:#3a76b6;transform-origin:0 16.2px;transform:scaleY(1.045);">2</div>
<div class="t" style="left:2698.7px;top:841.7px;font-size:17.7px;color:#3a76b6;transform-origin:0 16.3px;transform:scaleY(1.045);">Next</div>
<div style="left:2763.1px;top:829.2px;width:130.7px;height:41.6px;background:#56636f;border-radius:6px"></div>
<div class="t" style="left:2778.6px;top:842.0px;font-size:17.4px;color:#fff;transform-origin:0 16.0px;transform:scaleY(1.045);">Page Size</div>
<svg style="position:absolute;left:2867.0px;top:849.0px;width:12.0px;height:6.5px;" viewBox="0 0 10 6" preserveAspectRatio="none"><path d="M0 0H10L5 6Z" fill="#fff"/></svg>
<div class="t" style="left:2616.8px;top:912.3px;font-size:20.3px;color:#333333;transform-origin:0 18.7px;transform:scaleY(1.045);">Search:</div>
<div style="left:2697.2px;top:903.2px;width:203.6px;height:44.4px;border:1px solid #a6a6a6;box-sizing:border-box;background:#fff"></div>
<div style="left:158.4px;top:903.0px;width:188.9px;height:49.7px;border:1px solid #cccccc;box-sizing:border-box;background:#fff"></div>
<div class="t" style="left:-347.1px;width:1200px;text-align:center;top:917.0px;font-size:21.2px;color:#333333;transform-origin:0 19.5px;transform:scaleY(1.045);">Column visibility</div>
<div style="left:357.4px;top:903.0px;width:88.0px;height:49.7px;border:1px solid #cccccc;box-sizing:border-box;background:#fff"></div>
<div class="t" style="left:-198.6px;width:1200px;text-align:center;top:917.0px;font-size:21.2px;color:#333333;transform-origin:0 19.5px;transform:scaleY(1.045);">Copy</div>
<div style="left:455.5px;top:903.0px;width:87.2px;height:49.7px;border:1px solid #cccccc;box-sizing:border-box;background:#fff"></div>
<div class="t" style="left:-100.9px;width:1200px;text-align:center;top:917.0px;font-size:21.2px;color:#333333;transform-origin:0 19.5px;transform:scaleY(1.045);">Excel</div>
<div style="left:552.4px;top:903.0px;width:79.1px;height:49.7px;border:1px solid #cccccc;box-sizing:border-box;background:#fff"></div>
<div class="t" style="left:-8.0px;width:1200px;text-align:center;top:917.0px;font-size:21.2px;color:#333333;transform-origin:0 19.5px;transform:scaleY(1.045);">CSV</div>
<div style="left:641.2px;top:903.0px;width:78.3px;height:49.7px;border:1px solid #cccccc;box-sizing:border-box;background:#fff"></div>
<div class="t" style="left:80.4px;width:1200px;text-align:center;top:917.0px;font-size:21.2px;color:#333333;transform-origin:0 19.5px;transform:scaleY(1.045);">PDF</div>
<div style="left:729.2px;top:903.0px;width:80.4px;height:49.7px;border:1px solid #cccccc;box-sizing:border-box;background:#fff"></div>
<div class="t" style="left:169.4px;width:1200px;text-align:center;top:917.0px;font-size:21.2px;color:#333333;transform-origin:0 19.5px;transform:scaleY(1.045);">Print</div>
<div class="t" style="left:999.3px;top:910.8px;font-size:26.6px;color:#e63c23;font-weight:bold;transform-origin:0 24.5px;transform:scaleY(1.045);">Findings</div>
<div style="left:143.2px;top:1066.0px;width:2780.4px;height:2.2px;background:#d6d6d6"></div>
<div style="left:192.0px;top:1020.0px;width:17.3px;height:17.4px;border:1.3px solid #767676;border-radius:3.5px;box-sizing:border-box;background:#fff"></div>
<svg style="position:absolute;left:329.0px;top:1009.0px;width:12.5px;height:25.0px;" viewBox="0 0 12 24" preserveAspectRatio="none"><path d="M6 0L12 11.6H0Z" fill="#e3e3e3"/><path d="M0 12.4H12L6 24Z" fill="#f0f0f0"/></svg>
<svg style="position:absolute;left:472.4px;top:1009.0px;width:12.5px;height:25.0px;" viewBox="0 0 12 24" preserveAspectRatio="none"><path d="M6 0L12 11.6H0Z" fill="#e3e3e3"/><path d="M0 12.4H12L6 24Z" fill="#f0f0f0"/></svg>
<svg style="position:absolute;left:1055.8px;top:1009.0px;width:12.5px;height:25.0px;" viewBox="0 0 12 24" preserveAspectRatio="none"><path d="M6 0L12 11.6H0Z" fill="#e3e3e3"/><path d="M0 12.4H12L6 24Z" fill="#f0f0f0"/></svg>
<svg style="position:absolute;left:1247.7px;top:1009.0px;width:12.5px;height:25.0px;" viewBox="0 0 12 24" preserveAspectRatio="none"><path d="M6 0L12 11.6H0Z" fill="#e3e3e3"/><path d="M0 12.4H12L6 24Z" fill="#f0f0f0"/></svg>
<svg style="position:absolute;left:1427.4px;top:1009.0px;width:12.5px;height:25.0px;" viewBox="0 0 12 24" preserveAspectRatio="none"><path d="M6 0L12 11.6H0Z" fill="#e3e3e3"/><path d="M0 12.4H12L6 24Z" fill="#f0f0f0"/></svg>
<svg style="position:absolute;left:1523.5px;top:1009.0px;width:12.5px;height:25.0px;" viewBox="0 0 12 24" preserveAspectRatio="none"><path d="M6 0L12 11.6H0Z" fill="#e3e3e3"/><path d="M0 12.4H12L6 24Z" fill="#f0f0f0"/></svg>
<svg style="position:absolute;left:1621.2px;top:1009.0px;width:12.5px;height:25.0px;" viewBox="0 0 12 24" preserveAspectRatio="none"><path d="M6 0L12 11.6H0Z" fill="#e3e3e3"/><path d="M0 12.4H12L6 24Z" fill="#f0f0f0"/></svg>
<svg style="position:absolute;left:1774.0px;top:1009.0px;width:12.5px;height:25.0px;" viewBox="0 0 12 24" preserveAspectRatio="none"><path d="M6 0L12 11.6H0Z" fill="#e3e3e3"/><path d="M0 12.4H12L6 24Z" fill="#f0f0f0"/></svg>
<svg style="position:absolute;left:2042.0px;top:1009.0px;width:12.5px;height:25.0px;" viewBox="0 0 12 24" preserveAspectRatio="none"><path d="M6 0L12 11.6H0Z" fill="#e3e3e3"/><path d="M0 12.4H12L6 24Z" fill="#f0f0f0"/></svg>
<svg style="position:absolute;left:2697.0px;top:1009.0px;width:12.5px;height:25.0px;" viewBox="0 0 12 24" preserveAspectRatio="none"><path d="M6 0L12 11.6H0Z" fill="#e3e3e3"/><path d="M0 12.4H12L6 24Z" fill="#f0f0f0"/></svg>
<svg style="position:absolute;left:2893.4px;top:1009.0px;width:12.5px;height:25.0px;" viewBox="0 0 12 24" preserveAspectRatio="none"><path d="M6 0L12 11.6H0Z" fill="#e3e3e3"/><path d="M0 12.4H12L6 24Z" fill="#f0f0f0"/></svg>
<svg style="position:absolute;left:938.3px;top:1009.0px;width:12.5px;height:25.0px;" viewBox="0 0 12 24" preserveAspectRatio="none"><path d="M6 0L12 11.6H0Z" fill="#808080"/><path d="M0 12.4H12L6 24Z" fill="#f0f0f0"/></svg>
<div class="t" style="left:373.5px;top:1025.1px;font-size:20.8px;color:#333333;font-weight:bold;transform-origin:0 19.1px;transform:scaleY(1.045);">Severity</div>
<div class="t" style="left:517.7px;top:1024.8px;font-size:21.1px;color:#333333;font-weight:bold;transform-origin:0 19.4px;transform:scaleY(1.045);">Name</div>
<div class="t" style="left:982.7px;top:1024.9px;font-size:21px;color:#333333;font-weight:bold;transform-origin:0 19.3px;transform:scaleY(1.045);">CWE</div>
<div class="t" style="left:1101.2px;top:995.0px;font-size:20.6px;color:#333333;font-weight:bold;transform-origin:0 19.0px;transform:scaleY(1.045);">Vulnerability</div>
<div class="t" style="left:1101.2px;top:1025.2px;font-size:20.6px;color:#333333;font-weight:bold;transform-origin:0 19.0px;transform:scaleY(1.045);">Id</div>
<div class="t" style="left:1293.2px;top:1024.9px;font-size:21px;color:#333333;font-weight:bold;transform-origin:0 19.3px;transform:scaleY(1.045);">Date</div>
<div class="t" style="left:1472.0px;top:1024.9px;font-size:21px;color:#333333;font-weight:bold;transform-origin:0 19.3px;transform:scaleY(1.045);">Age</div>
<div class="t" style="left:1568.3px;top:1024.9px;font-size:21px;color:#333333;font-weight:bold;transform-origin:0 19.3px;transform:scaleY(1.045);">SLA</div>
<div class="t" style="left:1667.0px;top:1024.9px;font-size:21px;color:#333333;font-weight:bold;transform-origin:0 19.3px;transform:scaleY(1.045);">Reporter</div>
<div class="t" style="left:1819.0px;top:1025.1px;font-size:20.8px;color:#333333;font-weight:bold;transform-origin:0 19.1px;transform:scaleY(1.045);">Status</div>
<div class="t" style="left:2087.6px;top:1024.9px;font-size:21px;color:#333333;font-weight:bold;transform-origin:0 19.3px;transform:scaleY(1.045);">Group</div>
<div class="t" style="left:2742.8px;top:994.7px;font-size:21px;color:#333333;font-weight:bold;transform-origin:0 19.3px;transform:scaleY(1.045);">Planned</div>
<div class="t" style="left:2742.8px;top:1025.0px;font-size:20.9px;color:#333333;font-weight:bold;transform-origin:0 19.2px;transform:scaleY(1.045);">Remediation</div>
<div style="left:143.2px;top:1068.2px;width:2780.4px;height:89.0px;background:#f9f9f9"></div>
<div style="left:143.2px;top:1156.2px;width:2780.4px;height:1.0px;background:#dddddd"></div>
<div style="left:218.3px;top:1089.2px;width:18.7px;height:18.3px;border:1.3px solid #767676;border-radius:3.5px;box-sizing:border-box;background:#fff"></div>
<div style="left:326.7px;top:1087.4px;width:5.0px;height:5.0px;background:#55636f;border-radius:50%"></div>
<div style="left:326.7px;top:1094.0px;width:5.0px;height:5.0px;background:#55636f;border-radius:50%"></div>
<div style="left:326.7px;top:1100.6px;width:5.0px;height:5.0px;background:#55636f;border-radius:50%"></div>
<div style="left:402.0px;top:1085.2px;width:57.0px;height:28.0px;background:#e4994a"></div>
<div class="t" style="left:-169.5px;width:1200px;text-align:center;top:1089.5px;font-size:16.5px;color:#fff;font-weight:bold;transform-origin:0 15.2px;transform:scaleY(1.045);">High</div>
<div class="t" style="left:517.6px;top:1084.6px;font-size:21.3px;color:#55636f;transform-origin:0 19.6px;transform:scaleY(1.045);">generic.secrets.security.detected-sonarqube-</div>
<div class="t" style="left:517.6px;top:1118.1px;font-size:21.3px;color:#55636f;transform-origin:0 19.6px;transform:scaleY(1.045);">docs-api-key.de…</div>
<svg style="position:absolute;left:696.0px;top:1116.2px;width:22.0px;height:15.0px;" viewBox="0 0 22 15" preserveAspectRatio="none"><path d="M5 2.5L1 7.5L5 12.5M17 2.5L21 7.5L17 12.5M13 0.5L9 14.5" stroke="#333333" stroke-width="2" fill="none" stroke-linecap="round"/></svg>
<svg style="position:absolute;left:723.3px;top:1115.7px;width:17.7px;height:16.0px;" viewBox="0 0 18 16" preserveAspectRatio="none"><path d="M1.5 0H16.5Q18 0 18 1.5V9.5Q18 11 16.5 11H8L4 15V11H1.5Q0 11 0 9.5V1.5Q0 0 1.5 0Z" fill="#333333"/></svg>
<div class="t" style="left:747.0px;top:1115.0px;font-size:16.5px;color:#55636f;transform-origin:0 15.2px;transform:scaleY(1.045);">(1)</div>
<svg style="position:absolute;left:983.0px;top:1086.2px;width:20.6px;height:20.6px;" viewBox="0 0 20 20" preserveAspectRatio="none"><path d="M9 3H4Q2 3 2 5V16Q2 18 4 18H15Q17 18 17 16V11" stroke="#55636f" stroke-width="2.3" fill="none" stroke-linecap="round"/><path d="M12 2H18V8M18 2L9.5 10.5" stroke="#55636f" stroke-width="2.3" fill="none" stroke-linecap="round" stroke-linejoin="round"/></svg>
<div class="t" style="left:1010.3px;top:1084.9px;font-size:21px;color:#55636f;transform-origin:0 19.3px;transform:scaleY(1.045);">798</div>
<div class="t" style="left:1292.4px;top:1084.8px;font-size:21.1px;color:#333333;transform-origin:0 19.4px;transform:scaleY(1.045);">Oct. 19, 2023</div>
<div class="t" style="left:1474.0px;top:1084.9px;font-size:21px;color:#333333;transform-origin:0 19.3px;transform:scaleY(1.045);">1</div>
<div style="left:1568.0px;top:1085.2px;width:39.0px;height:27.8px;background:#0000e6"></div>
<div class="t" style="left:987.5px;width:1200px;text-align:center;top:1089.0px;font-size:16.5px;color:#fff;font-weight:bold;transform-origin:0 15.2px;transform:scaleY(1.045);">29</div>
<div class="t" style="left:1666.4px;top:1084.9px;font-size:21px;color:#333333;transform-origin:0 19.3px;transform:scaleY(1.045);">Admin User</div>
<div class="t" style="left:1666.4px;top:1114.3px;font-size:21px;color:#333333;transform-origin:0 19.3px;transform:scaleY(1.045);">(admin)</div>
<div class="t" style="left:1819.6px;top:1084.8px;font-size:21.1px;color:#333333;transform-origin:0 19.4px;transform:scaleY(1.045);">Inactive, Mitigated</div>
<svg style="position:absolute;left:2000.0px;top:1082.2px;width:28.0px;height:28.0px;" viewBox="0 0 28 28" preserveAspectRatio="none"><path d="M8.05 7.54A8.3 8.3 0 1 1 8.17 20.16" stroke="#333333" stroke-width="2.5" fill="none" stroke-linecap="round"/><path d="M3.3 4.6V11.1H9.4Z" fill="#333333" stroke="#333333" stroke-width="0.8" stroke-linejoin="round"/><path d="M13.5 9.2V13.8L16.4 16.8" stroke="#333333" stroke-width="1.9" fill="none" stroke-linecap="round" stroke-linejoin="round"/></svg>
<div class="t" style="left:1799.5px;width:1200px;text-align:center;top:1084.7px;font-size:21.25px;color:#55636f;transform-origin:0 19.6px;transform:scaleY(1.045);">Findings in: Filepath sast/sonar/sonarcloud.bat</div>
<div style="left:143.2px;top:1157.2px;width:2780.4px;height:89.3px;background:#ffffff"></div>
<div style="left:143.2px;top:1245.5px;width:2780.4px;height:1.0px;background:#dddddd"></div>
<div style="left:218.3px;top:1178.2px;width:18.7px;height:18.3px;border:1.3px solid #767676;border-radius:3.5px;box-sizing:border-box;background:#fff"></div>
<div style="left:326.7px;top:1176.4px;width:5.0px;height:5.0px;background:#55636f;border-radius:50%"></div>
<div style="left:326.7px;top:1183.0px;width:5.0px;height:5.0px;background:#55636f;border-radius:50%"></div>
<div style="left:326.7px;top:1189.6px;width:5.0px;height:5.0px;background:#55636f;border-radius:50%"></div>
<div style="left:402.0px;top:1174.2px;width:57.0px;height:28.0px;background:#e4994a"></div>
<div class="t" style="left:-169.5px;width:1200px;text-align:center;top:1178.5px;font-size:16.5px;color:#fff;font-weight:bold;transform-origin:0 15.2px;transform:scaleY(1.045);">High</div>
<div class="t" style="left:517.6px;top:1173.6px;font-size:21.3px;color:#55636f;transform-origin:0 19.6px;transform:scaleY(1.045);">generic.secrets.security.detected-sonarqube-</div>
<div class="t" style="left:517.6px;top:1207.1px;font-size:21.3px;color:#55636f;transform-origin:0 19.6px;transform:scaleY(1.045);">docs-api-key.de…</div>
<svg style="position:absolute;left:696.0px;top:1205.2px;width:22.0px;height:15.0px;" viewBox="0 0 22 15" preserveAspectRatio="none"><path d="M5 2.5L1 7.5L5 12.5M17 2.5L21 7.5L17 12.5M13 0.5L9 14.5" stroke="#333333" stroke-width="2" fill="none" stroke-linecap="round"/></svg>
<svg style="position:absolute;left:723.3px;top:1204.7px;width:17.7px;height:16.0px;" viewBox="0 0 18 16" preserveAspectRatio="none"><path d="M1.5 0H16.5Q18 0 18 1.5V9.5Q18 11 16.5 11H8L4 15V11H1.5Q0 11 0 9.5V1.5Q0 0 1.5 0Z" fill="#333333"/></svg>
<div class="t" style="left:747.0px;top:1204.0px;font-size:16.5px;color:#55636f;transform-origin:0 15.2px;transform:scaleY(1.045);">(1)</div>
<svg style="position:absolute;left:983.0px;top:1175.2px;width:20.6px;height:20.6px;" viewBox="0 0 20 20" preserveAspectRatio="none"><path d="M9 3H4Q2 3 2 5V16Q2 18 4 18H15Q17 18 17 16V11" stroke="#55636f" stroke-width="2.3" fill="none" stroke-linecap="round"/><path d="M12 2H18V8M18 2L9.5 10.5" stroke="#55636f" stroke-width="2.3" fill="none" stroke-linecap="round" stroke-linejoin="round"/></svg>
<div class="t" style="left:1010.3px;top:1173.9px;font-size:21px;color:#55636f;transform-origin:0 19.3px;transform:scaleY(1.045);">798</div>
<div class="t" style="left:1292.4px;top:1173.8px;font-size:21.1px;color:#333333;transform-origin:0 19.4px;transform:scaleY(1.045);">Oct. 19, 2023</div>
<div class="t" style="left:1474.0px;top:1173.9px;font-size:21px;color:#333333;transform-origin:0 19.3px;transform:scaleY(1.045);">1</div>
<div style="left:1568.0px;top:1174.2px;width:39.0px;height:27.8px;background:#0000e6"></div>
<div class="t" style="left:987.5px;width:1200px;text-align:center;top:1178.0px;font-size:16.5px;color:#fff;font-weight:bold;transform-origin:0 15.2px;transform:scaleY(1.045);">29</div>
<div class="t" style="left:1666.4px;top:1173.9px;font-size:21px;color:#333333;transform-origin:0 19.3px;transform:scaleY(1.045);">Admin User</div>
<div class="t" style="left:1666.4px;top:1203.3px;font-size:21px;color:#333333;transform-origin:0 19.3px;transform:scaleY(1.045);">(admin)</div>
<div class="t" style="left:1819.6px;top:1173.8px;font-size:21.1px;color:#333333;transform-origin:0 19.4px;transform:scaleY(1.045);">Inactive, Mitigated</div>
<svg style="position:absolute;left:2000.0px;top:1171.2px;width:28.0px;height:28.0px;" viewBox="0 0 28 28" preserveAspectRatio="none"><path d="M8.05 7.54A8.3 8.3 0 1 1 8.17 20.16" stroke="#333333" stroke-width="2.5" fill="none" stroke-linecap="round"/><path d="M3.3 4.6V11.1H9.4Z" fill="#333333" stroke="#333333" stroke-width="0.8" stroke-linejoin="round"/><path d="M13.5 9.2V13.8L16.4 16.8" stroke="#333333" stroke-width="1.9" fill="none" stroke-linecap="round" stroke-linejoin="round"/></svg>
<div class="t" style="left:1799.5px;width:1200px;text-align:center;top:1173.7px;font-size:21.25px;color:#55636f;transform-origin:0 19.6px;transform:scaleY(1.045);">Findings in: Filepath report.json</div>
<div style="left:143.2px;top:1246.5px;width:2780.4px;height:89.0px;background:#f9f9f9"></div>
<div style="left:143.2px;top:1334.5px;width:2780.4px;height:1.0px;background:#dddddd"></div>
<div style="left:218.3px;top:1267.5px;width:18.7px;height:18.3px;border:1.3px solid #767676;border-radius:3.5px;box-sizing:border-box;background:#fff"></div>
<div style="left:326.7px;top:1265.7px;width:5.0px;height:5.0px;background:#55636f;border-radius:50%"></div>
<div style="left:326.7px;top:1272.3px;width:5.0px;height:5.0px;background:#55636f;border-radius:50%"></div>
<div style="left:326.7px;top:1278.9px;width:5.0px;height:5.0px;background:#55636f;border-radius:50%"></div>
<div style="left:388.0px;top:1263.5px;width:85.0px;height:27.5px;background:#efde4b"></div>
<div class="t" style="left:-169.5px;width:1200px;text-align:center;top:1267.8px;font-size:16.5px;color:#fff;font-weight:bold;transform-origin:0 15.2px;transform:scaleY(1.045);">Medium</div>
<div class="t" style="left:517.6px;top:1262.9px;font-size:21.3px;color:#55636f;transform-origin:0 19.6px;transform:scaleY(1.045);">java.lang.security.audit.active-debug-code-</div>
<div class="t" style="left:517.6px;top:1296.4px;font-size:21.3px;color:#55636f;transform-origin:0 19.6px;transform:scaleY(1.045);">printstacktrace.…</div>
<svg style="position:absolute;left:691.0px;top:1294.5px;width:22.0px;height:15.0px;" viewBox="0 0 22 15" preserveAspectRatio="none"><path d="M5 2.5L1 7.5L5 12.5M17 2.5L21 7.5L17 12.5M13 0.5L9 14.5" stroke="#333333" stroke-width="2" fill="none" stroke-linecap="round"/></svg>
<svg style="position:absolute;left:718.3px;top:1294.0px;width:17.7px;height:16.0px;" viewBox="0 0 18 16" preserveAspectRatio="none"><path d="M1.5 0H16.5Q18 0 18 1.5V9.5Q18 11 16.5 11H8L4 15V11H1.5Q0 11 0 9.5V1.5Q0 0 1.5 0Z" fill="#333333"/></svg>
<div class="t" style="left:742.0px;top:1293.3px;font-size:16.5px;color:#55636f;transform-origin:0 15.2px;transform:scaleY(1.045);">(1)</div>
<svg style="position:absolute;left:983.0px;top:1264.5px;width:20.6px;height:20.6px;" viewBox="0 0 20 20" preserveAspectRatio="none"><path d="M9 3H4Q2 3 2 5V16Q2 18 4 18H15Q17 18 17 16V11" stroke="#55636f" stroke-width="2.3" fill="none" stroke-linecap="round"/><path d="M12 2H18V8M18 2L9.5 10.5" stroke="#55636f" stroke-width="2.3" fill="none" stroke-linecap="round" stroke-linejoin="round"/></svg>
<div class="t" style="left:1010.3px;top:1263.2px;font-size:21px;color:#55636f;transform-origin:0 19.3px;transform:scaleY(1.045);">489</div>
<div class="t" style="left:1292.4px;top:1263.1px;font-size:21.1px;color:#333333;transform-origin:0 19.4px;transform:scaleY(1.045);">Oct. 19, 2023</div>
<div class="t" style="left:1474.0px;top:1263.2px;font-size:21px;color:#333333;transform-origin:0 19.3px;transform:scaleY(1.045);">1</div>
<div style="left:1568.0px;top:1263.5px;width:39.0px;height:27.8px;background:#0000e6"></div>
<div class="t" style="left:987.5px;width:1200px;text-align:center;top:1267.3px;font-size:16.5px;color:#fff;font-weight:bold;transform-origin:0 15.2px;transform:scaleY(1.045);">89</div>
<div class="t" style="left:1666.4px;top:1263.2px;font-size:21px;color:#333333;transform-origin:0 19.3px;transform:scaleY(1.045);">Admin User</div>
<div class="t" style="left:1666.4px;top:1292.6px;font-size:21px;color:#333333;transform-origin:0 19.3px;transform:scaleY(1.045);">(admin)</div>
<div class="t" style="left:1819.6px;top:1263.1px;font-size:21.1px;color:#333333;transform-origin:0 19.4px;transform:scaleY(1.045);">Inactive, Mitigated</div>
<svg style="position:absolute;left:2000.0px;top:1260.5px;width:28.0px;height:28.0px;" viewBox="0 0 28 28" preserveAspectRatio="none"><path d="M8.05 7.54A8.3 8.3 0 1 1 8.17 20.16" stroke="#333333" stroke-width="2.5" fill="none" stroke-linecap="round"/><path d="M3.3 4.6V11.1H9.4Z" fill="#333333" stroke="#333333" stroke-width="0.8" stroke-linejoin="round"/><path d="M13.5 9.2V13.8L16.4 16.8" stroke="#333333" stroke-width="1.9" fill="none" stroke-linecap="round" stroke-linejoin="round"/></svg>
<div class="t" style="left:1799.5px;width:1200px;text-align:center;top:1263.0px;font-size:21.25px;color:#55636f;transform-origin:0 19.6px;transform:scaleY(1.045);">Findings in: Filepath</div>
<div class="t" style="left:1799.5px;width:1200px;text-align:center;top:1292.4px;font-size:21.25px;color:#55636f;transform-origin:0 19.6px;transform:scaleY(1.045);">src/main/java/core/sebas/servlets/FirstAuthentication.java</div>
<div style="left:143.2px;top:1335.5px;width:2780.4px;height:88.7px;background:#ffffff"></div>
<div style="left:143.2px;top:1423.2px;width:2780.4px;height:1.0px;background:#dddddd"></div>
<div style="left:218.3px;top:1356.5px;width:18.7px;height:18.3px;border:1.3px solid #767676;border-radius:3.5px;box-sizing:border-box;background:#fff"></div>
<div style="left:326.7px;top:1354.7px;width:5.0px;height:5.0px;background:#55636f;border-radius:50%"></div>
<div style="left:326.7px;top:1361.3px;width:5.0px;height:5.0px;background:#55636f;border-radius:50%"></div>
<div style="left:326.7px;top:1367.9px;width:5.0px;height:5.0px;background:#55636f;border-radius:50%"></div>
<div style="left:388.0px;top:1352.5px;width:85.0px;height:27.5px;background:#efde4b"></div>
<div class="t" style="left:-169.5px;width:1200px;text-align:center;top:1356.8px;font-size:16.5px;color:#fff;font-weight:bold;transform-origin:0 15.2px;transform:scaleY(1.045);">Medium</div>
<div class="t" style="left:517.6px;top:1351.9px;font-size:21.3px;color:#55636f;transform-origin:0 19.6px;transform:scaleY(1.045);">java.lang.security.audit.active-debug-code-</div>
<div class="t" style="left:517.6px;top:1385.4px;font-size:21.3px;color:#55636f;transform-origin:0 19.6px;transform:scaleY(1.045);">printstacktrace.…</div>
<svg style="position:absolute;left:691.0px;top:1383.5px;width:22.0px;height:15.0px;" viewBox="0 0 22 15" preserveAspectRatio="none"><path d="M5 2.5L1 7.5L5 12.5M17 2.5L21 7.5L17 12.5M13 0.5L9 14.5" stroke="#333333" stroke-width="2" fill="none" stroke-linecap="round"/></svg>
<svg style="position:absolute;left:718.3px;top:1383.0px;width:17.7px;height:16.0px;" viewBox="0 0 18 16" preserveAspectRatio="none"><path d="M1.5 0H16.5Q18 0 18 1.5V9.5Q18 11 16.5 11H8L4 15V11H1.5Q0 11 0 9.5V1.5Q0 0 1.5 0Z" fill="#333333"/></svg>
<div class="t" style="left:742.0px;top:1382.3px;font-size:16.5px;color:#55636f;transform-origin:0 15.2px;transform:scaleY(1.045);">(1)</div>
<svg style="position:absolute;left:983.0px;top:1353.5px;width:20.6px;height:20.6px;" viewBox="0 0 20 20" preserveAspectRatio="none"><path d="M9 3H4Q2 3 2 5V16Q2 18 4 18H15Q17 18 17 16V11" stroke="#55636f" stroke-width="2.3" fill="none" stroke-linecap="round"/><path d="M12 2H18V8M18 2L9.5 10.5" stroke="#55636f" stroke-width="2.3" fill="none" stroke-linecap="round" stroke-linejoin="round"/></svg>
<div class="t" style="left:1010.3px;top:1352.2px;font-size:21px;color:#55636f;transform-origin:0 19.3px;transform:scaleY(1.045);">489</div>
<div class="t" style="left:1292.4px;top:1352.1px;font-size:21.1px;color:#333333;transform-origin:0 19.4px;transform:scaleY(1.045);">Oct. 19, 2023</div>
<div class="t" style="left:1474.0px;top:1352.2px;font-size:21px;color:#333333;transform-origin:0 19.3px;transform:scaleY(1.045);">1</div>
<div style="left:1568.0px;top:1352.5px;width:39.0px;height:27.8px;background:#0000e6"></div>
<div class="t" style="left:987.5px;width:1200px;text-align:center;top:1356.3px;font-size:16.5px;color:#fff;font-weight:bold;transform-origin:0 15.2px;transform:scaleY(1.045);">89</div>
<div class="t" style="left:1666.4px;top:1352.2px;font-size:21px;color:#333333;transform-origin:0 19.3px;transform:scaleY(1.045);">Admin User</div>
<div class="t" style="left:1666.4px;top:1381.6px;font-size:21px;color:#333333;transform-origin:0 19.3px;transform:scaleY(1.045);">(admin)</div>
<div class="t" style="left:1819.6px;top:1352.1px;font-size:21.1px;color:#333333;transform-origin:0 19.4px;transform:scaleY(1.045);">Inactive, Mitigated</div>
<svg style="position:absolute;left:2000.0px;top:1349.5px;width:28.0px;height:28.0px;" viewBox="0 0 28 28" preserveAspectRatio="none"><path d="M8.05 7.54A8.3 8.3 0 1 1 8.17 20.16" stroke="#333333" stroke-width="2.5" fill="none" stroke-linecap="round"/><path d="M3.3 4.6V11.1H9.4Z" fill="#333333" stroke="#333333" stroke-width="0.8" stroke-linejoin="round"/><path d="M13.5 9.2V13.8L16.4 16.8" stroke="#333333" stroke-width="1.9" fill="none" stroke-linecap="round" stroke-linejoin="round"/></svg>
<div class="t" style="left:1799.5px;width:1200px;text-align:center;top:1352.0px;font-size:21.25px;color:#55636f;transform-origin:0 19.6px;transform:scaleY(1.045);">Findings in: Filepath</div>
<div class="t" style="left:1799.5px;width:1200px;text-align:center;top:1381.4px;font-size:21.25px;color:#55636f;transform-origin:0 19.6px;transform:scaleY(1.045);">src/main/java/core/sebas/servlets/Authentication.java</div>
<div style="left:143.2px;top:1424.2px;width:2780.4px;height:7.8px;background:#f9f9f9"></div>
<div style="left:158.0px;top:972.0px;width:930.6px;height:451.5px;border:4.2px solid #e63c23;border-radius:22px;box-sizing:border-box"></div>
</div></body></html>
